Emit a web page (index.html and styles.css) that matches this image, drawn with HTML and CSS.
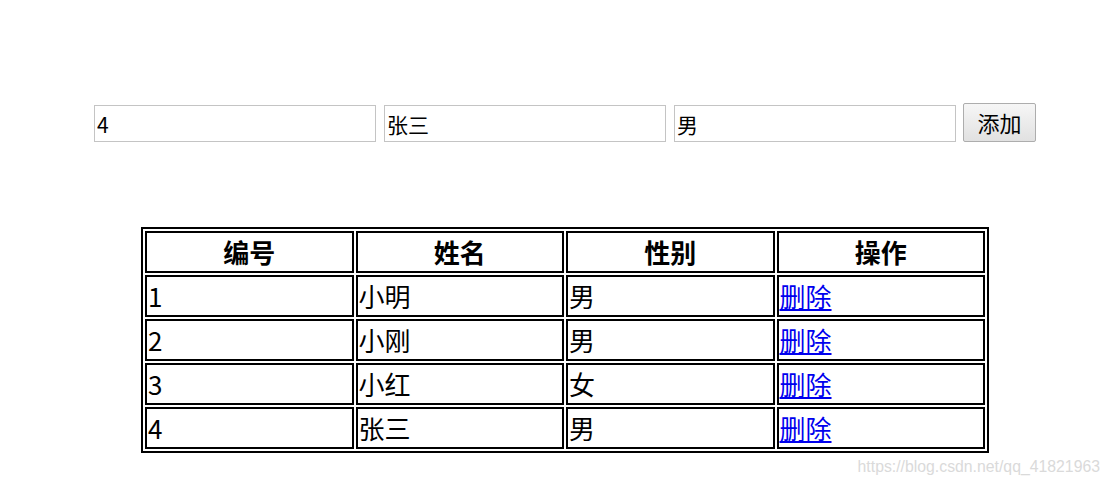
FILE: index.html
```html
<!DOCTYPE html>
<html lang="zh-CN">
<head>
    <meta charset="utf-8">
    <title>学生列表</title>
    <link rel="stylesheet" href="styles.css">
</head>
<body>
    <div class="page">
        <div class="add-form">
            <input type="text" class="field" value="4">
            <input type="text" class="field" value="张三">
            <input type="text" class="field" value="男">
            <button class="add-btn">添加</button>
        </div>

        <table class="list">
            <tr>
                <th>编号</th>
                <th>姓名</th>
                <th>性别</th>
                <th>操作</th>
            </tr>
            <tr>
                <td>1</td>
                <td>小明</td>
                <td>男</td>
                <td><a href="#">删除</a></td>
            </tr>
            <tr>
                <td>2</td>
                <td>小刚</td>
                <td>男</td>
                <td><a href="#">删除</a></td>
            </tr>
            <tr>
                <td>3</td>
                <td>小红</td>
                <td>女</td>
                <td><a href="#">删除</a></td>
            </tr>
            <tr>
                <td>4</td>
                <td>张三</td>
                <td>男</td>
                <td><a href="#">删除</a></td>
            </tr>
        </table>
    </div>
    <div class="watermark">https://blog.csdn.net/qq_41821963</div>
</body>
</html>
```

FILE: styles.css
```css
body {
    margin: 0;
    background-color: #ffffff;
    font-family: "Noto Sans CJK SC", "Noto Sans", sans-serif;
    color: #000;
}

.page {
    padding-left: 20px;
    display: flex;
    flex-direction: column;
    align-items: center;
}

.add-form {
    margin-top: 103px;
    display: flex;
    align-items: flex-end;
    gap: 8px;
}

.field {
    width: 282px;
    height: 37px;
    box-sizing: border-box;
    margin: 0;
    padding: 0 2px;
    border: 1px solid #c4c4c4;
    font-family: "Noto Sans CJK SC", sans-serif;
    font-size: 21px;
    line-height: 35px;
    color: #000;
    outline: none;
}

.add-btn {
    width: 73px;
    height: 39px;
    box-sizing: border-box;
    margin: 0 0 0 -1px;
    padding: 0;
    border: 1px solid #adadad;
    border-radius: 2px;
    background: linear-gradient(#f6f6f6, #e1e1e1);
    font-family: "Noto Sans CJK SC", sans-serif;
    font-size: 22px;
    line-height: 37px;
    color: #000;
}

.list {
    margin-top: 85px;
    width: 848px;
    border: 2px solid #000;
    border-spacing: 2px;
    font-size: 26px;
    table-layout: fixed;
}

.list tr {
    height: 42px;
}

.list th,
.list td {
    border: 2px solid #000;
    padding: 0 1px;
    line-height: 36px;
    vertical-align: middle;
}

.list th {
    font-weight: bold;
    text-align: center;
}

.list td {
    text-align: left;
}

.list a {
    color: #0000ee;
    text-decoration: underline;
}

.watermark {
    position: absolute;
    top: 458px;
    right: 10px;
    font-family: "Liberation Sans", Arial, sans-serif;
    font-size: 15.8px;
    color: #dadada;
}
```
